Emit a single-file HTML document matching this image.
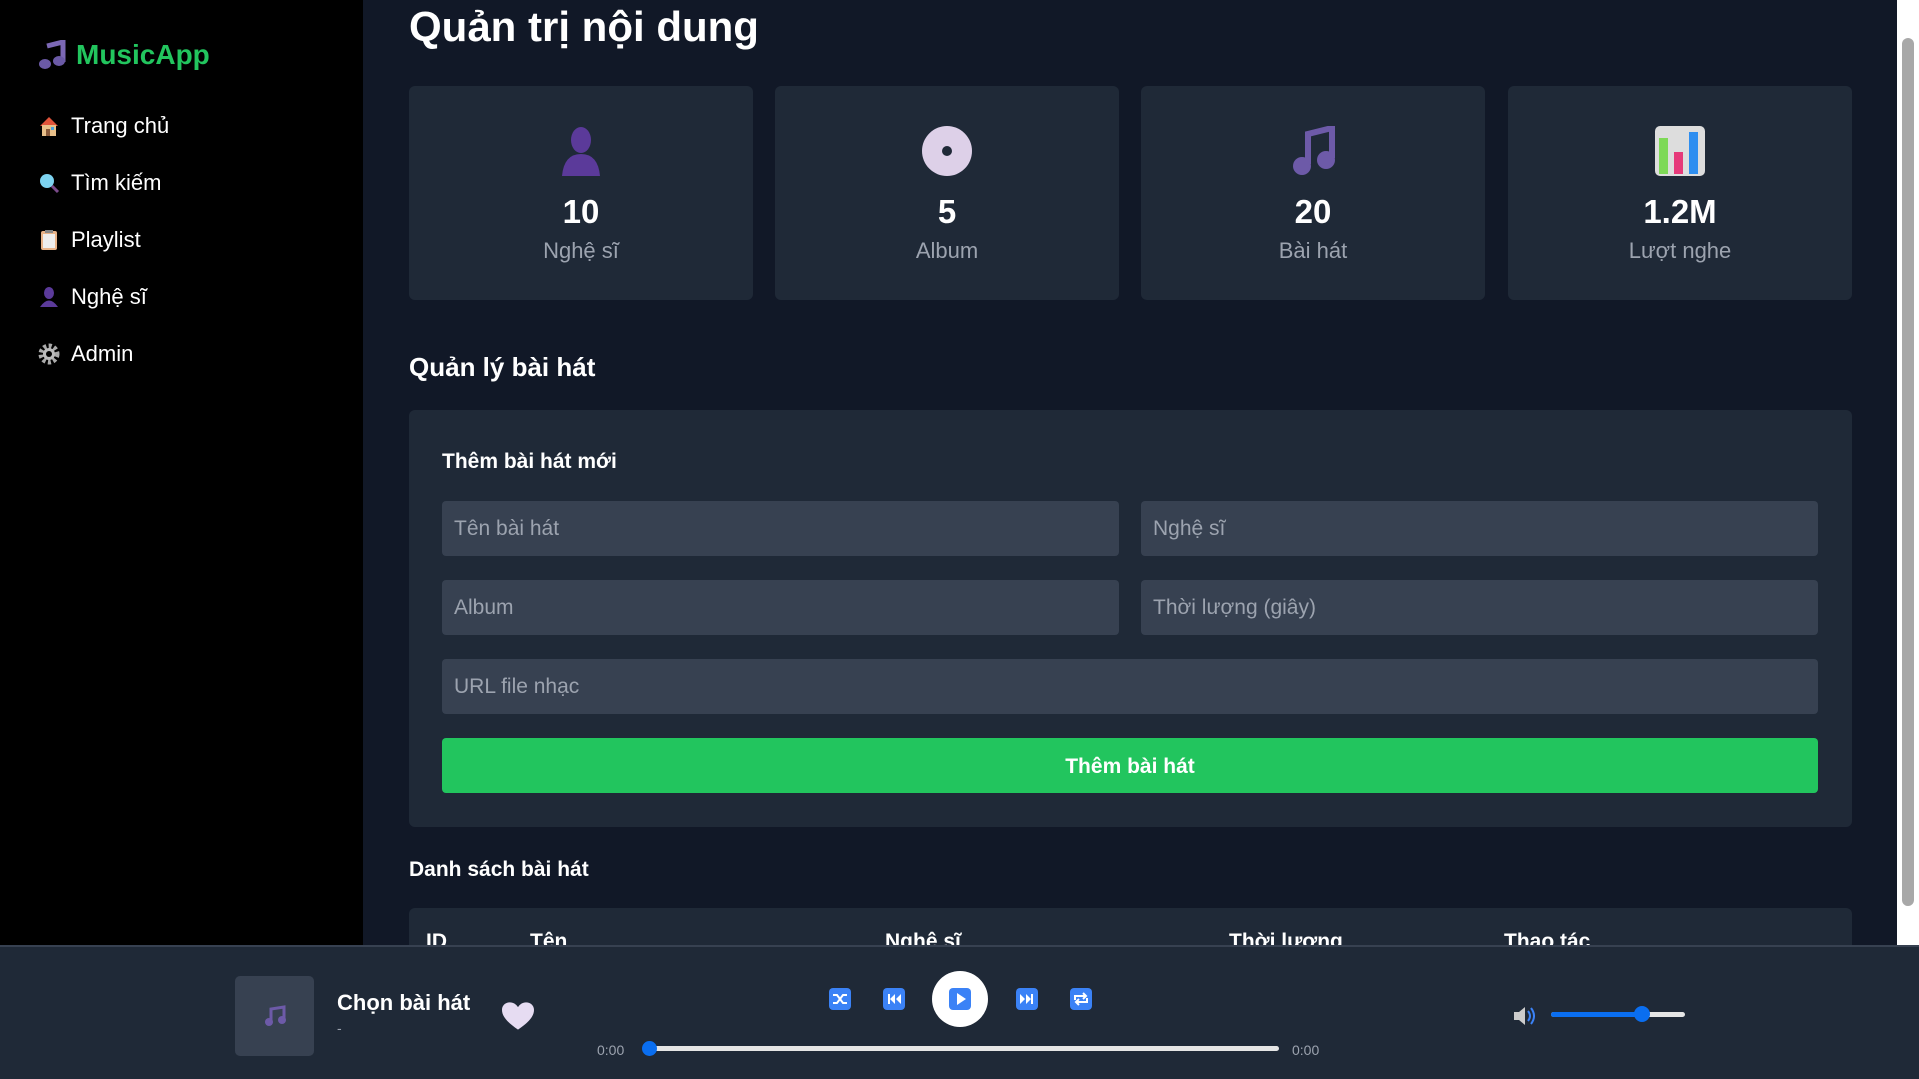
<!DOCTYPE html>
<html><head><meta charset="utf-8"><style>
*{box-sizing:border-box;margin:0;padding:0}
body{width:1919px;height:1079px;overflow:hidden;background:#111827;font-family:"Liberation Sans",sans-serif;color:#fff;position:relative}
.side{position:absolute;left:0;top:0;width:363px;height:945px;background:#000}
.logo{position:absolute;left:38px;top:39px;font-size:28px;font-weight:bold;color:#22c55e;display:flex;align-items:center;gap:10px}
.nav{position:absolute;left:38px;font-size:22px;color:#fff;display:flex;align-items:center;gap:11px}
.ic{width:22px;height:22px;display:inline-block}
.abs{position:absolute}
h1{position:absolute;left:409px;top:3px;font-size:42px;font-weight:bold}
.card{position:absolute;background:#1f2937;border-radius:6px}
.stat{top:86px;height:214px;width:344px;text-align:center}
.stat .n{position:absolute;top:107px;left:0;right:0;font-size:33px;font-weight:bold}
.stat .l{position:absolute;top:152px;left:0;right:0;font-size:22px;color:#9ca3af}
.stat svg{position:absolute;top:40px;left:147px}
.inp{position:absolute;background:#374151;border-radius:4px;height:55px;color:#9ca3af;font-size:21px;padding:16px 12px}
.scroll{position:absolute;left:1897px;top:0;width:22px;height:945px;background:#fff}
.thumb{position:absolute;left:1902px;top:38px;width:12px;height:868px;background:#a8a8a8;border-radius:6px}
.player{position:absolute;left:0;top:945px;width:1919px;height:134px;background:#1f2937;border-top:2px solid #374151}
.btn{position:absolute;width:22px;height:22px;border-radius:4px;background:#3b82f6;top:41px}
</style></head><body>
<div class="side">
 <div class="logo"><svg width="28" height="30" viewBox="0 0 28 30"><path d="M9 6 L25 2 V22" stroke="#7c68b5" stroke-width="5" fill="none"/><ellipse cx="7" cy="24" rx="6" ry="5" fill="#6b5aa6"/><ellipse cx="21" cy="21" rx="6" ry="5" fill="#6b5aa6"/></svg>MusicApp</div>
 <div class="nav" style="top:113px"><svg class="ic" viewBox="0 0 22 22"><path d="M2 11 L11 2 L20 11Z" fill="#e0533a"/><rect x="4" y="10" width="14" height="11" fill="#e8c08a"/><rect x="8" y="14" width="4" height="7" fill="#8a5a3a"/><rect x="13" y="12" width="3" height="3" fill="#4aa3df"/></svg>Trang chủ</div>
 <div class="nav" style="top:170px"><svg class="ic" viewBox="0 0 22 22"><circle cx="9" cy="9" r="7" fill="#7dd3f0"/><path d="M14 14 L20 20" stroke="#7a4a8a" stroke-width="3"/></svg>Tìm kiếm</div>
 <div class="nav" style="top:227px"><svg class="ic" viewBox="0 0 22 22"><rect x="3" y="2" width="16" height="19" rx="2" fill="#e8b48a"/><rect x="5" y="5" width="12" height="14" fill="#eee"/><rect x="7" y="1" width="8" height="3" fill="#888"/></svg>Playlist</div>
 <div class="nav" style="top:284px"><svg class="ic" viewBox="0 0 22 22"><ellipse cx="11" cy="7" rx="5" ry="6" fill="#5b3a9a"/><path d="M2 21 Q11 8 20 21Z" fill="#5b3a9a"/></svg>Nghệ sĩ</div>
 <div class="nav" style="top:341px"><svg class="ic" viewBox="0 0 22 22"><circle cx="11" cy="11" r="8" fill="none" stroke="#aaa" stroke-width="5" stroke-dasharray="3 2.3"/><circle cx="11" cy="11" r="6" fill="#bbb"/><circle cx="11" cy="11" r="3" fill="#000"/></svg>Admin</div>
</div>
<h1>Quản trị nội dung</h1>
<div class="card stat" style="left:409px"><svg width="50" height="50" viewBox="0 0 50 50"><ellipse cx="25" cy="14" rx="10" ry="13" fill="#5b3a9a"/><path d="M6 50 Q8 28 25 28 Q42 28 44 50Z" fill="#5b3a9a"/></svg><div class="n">10</div><div class="l">Nghệ sĩ</div></div>
<div class="card stat" style="left:775px"><svg width="50" height="50" viewBox="0 0 50 50"><circle cx="25" cy="25" r="25" fill="#ddd0e8"/><circle cx="25" cy="25" r="5" fill="#1f2937"/></svg><div class="n">5</div><div class="l">Album</div></div>
<div class="card stat" style="left:1141px"><svg width="50" height="50" viewBox="0 0 50 50"><path d="M20 38 V8 L44 2 V32" stroke="#6d5aa8" stroke-width="6" fill="none"/><ellipse cx="14" cy="40" rx="9" ry="9" fill="#6d5aa8"/><ellipse cx="38" cy="34" rx="9" ry="9" fill="#6d5aa8"/></svg><div class="n">20</div><div class="l">Bài hát</div></div>
<div class="card stat" style="left:1508px"><svg width="50" height="50" viewBox="0 0 50 50"><rect x="0" y="0" width="50" height="50" rx="5" fill="#ddd"/><rect x="4" y="12" width="9" height="36" fill="#7ed957"/><rect x="19" y="26" width="9" height="22" fill="#e63a7a"/><rect x="34" y="6" width="9" height="42" fill="#2e8ef0"/></svg><div class="n">1.2M</div><div class="l">Lượt nghe</div></div>
<div class="abs" style="left:409px;top:352px;font-size:26px;font-weight:bold">Quản lý bài hát</div>
<div class="card" style="left:409px;top:410px;width:1443px;height:417px"></div>
<div class="abs" style="left:442px;top:450px;font-size:21px;font-weight:bold">Thêm bài hát mới</div>
<div class="inp" style="left:442px;top:501px;width:677px">Tên bài hát</div>
<div class="inp" style="left:1141px;top:501px;width:677px">Nghệ sĩ</div>
<div class="inp" style="left:442px;top:580px;width:677px">Album</div>
<div class="inp" style="left:1141px;top:580px;width:677px">Thời lượng (giây)</div>
<div class="inp" style="left:442px;top:659px;width:1376px">URL file nhạc</div>
<div class="abs" style="left:442px;top:738px;width:1376px;height:55px;background:#22c55e;border-radius:4px;text-align:center;font-weight:bold;font-size:21px;line-height:57px">Thêm bài hát</div>
<div class="abs" style="left:409px;top:858px;font-size:21px;font-weight:bold">Danh sách bài hát</div>
<div class="card" style="left:409px;top:908px;width:1443px;height:60px"></div>
<div class="abs" style="top:930px;left:426px;font-size:21px;font-weight:bold">ID</div>
<div class="abs" style="top:930px;left:530px;font-size:21px;font-weight:bold">Tên</div>
<div class="abs" style="top:930px;left:885px;font-size:21px;font-weight:bold">Nghệ sĩ</div>
<div class="abs" style="top:930px;left:1229px;font-size:21px;font-weight:bold">Thời lượng</div>
<div class="abs" style="top:930px;left:1504px;font-size:21px;font-weight:bold">Thao tác</div>
<div class="scroll"></div><div class="thumb"></div>
<div class="player">
 <div class="abs" style="left:235px;top:29px;width:79px;height:80px;background:#374151;border-radius:5px"><svg style="position:absolute;left:28px;top:28px" width="24" height="24" viewBox="0 0 24 24"><path d="M8 18 V5 L21 3 V16" stroke="#6d5aa8" stroke-width="3" fill="none"/><circle cx="6" cy="18" r="4" fill="#6d5aa8"/><circle cx="19" cy="16" r="4" fill="#6d5aa8"/></svg></div>
 <div class="abs" style="left:337px;top:43px;font-size:22px;font-weight:bold">Chọn bài hát</div>
 <div class="abs" style="left:337px;top:73px;font-size:14px;color:#9ca3af">-</div>
 <svg class="abs" style="left:502px;top:55px" width="32" height="29" viewBox="0 0 34 30"><path d="M17 29 C4 20 0 14 0 8 C0 3 4 0 8.5 0 C12 0 15 2 17 5 C19 2 22 0 25.5 0 C30 0 34 3 34 8 C34 14 30 20 17 29Z" fill="#e6dcf2"/></svg>
 <div class="btn" style="left:829px"><svg width="22" height="22" viewBox="0 0 22 22"><path d="M4 7h4l6 8h4M4 15h4l6-8h4" stroke="#fff" stroke-width="2" fill="none"/></svg></div>
 <div class="btn" style="left:883px"><svg width="22" height="22" viewBox="0 0 22 22"><rect x="5" y="6" width="2" height="10" fill="#fff"/><path d="M12 6v10l-5-5zM18 6v10l-5-5z" fill="#fff"/></svg></div>
 <div class="abs" style="left:932px;top:24px;width:56px;height:56px;border-radius:50%;background:#fff"></div>
 <div class="btn" style="left:949px"><svg width="22" height="22" viewBox="0 0 22 22"><path d="M8 5v12l9-6z" fill="#fff"/></svg></div>
 <div class="btn" style="left:1016px"><svg width="22" height="22" viewBox="0 0 22 22"><path d="M4 6v10l5-5zM10 6v10l5-5z" fill="#fff"/><rect x="15" y="6" width="2" height="10" fill="#fff"/></svg></div>
 <div class="btn" style="left:1070px"><svg width="22" height="22" viewBox="0 0 22 22"><path d="M5 12V8h11M13 5l3 3-3 3M17 10v4H6M9 17l-3-3 3-3" stroke="#fff" stroke-width="2" fill="none"/></svg></div>
 <div class="abs" style="left:597px;top:95px;font-size:14px;color:#9ca3af">0:00</div>
 <div class="abs" style="left:649px;top:99px;width:630px;height:5px;background:#e5e5e5;border-radius:3px"></div>
 <div class="abs" style="left:642px;top:94px;width:15px;height:15px;border-radius:50%;background:#0a6ef0"></div>
 <div class="abs" style="left:1292px;top:95px;font-size:14px;color:#9ca3af">0:00</div>
 <svg class="abs" style="left:1513px;top:59px" width="22" height="20" viewBox="0 0 22 20"><path d="M1 6h5l6-5v18l-6-5H1z" fill="#ccc"/><path d="M15 5q4 5 0 10M18 2q6 8 0 16" stroke="#3b82f6" stroke-width="2" fill="none"/></svg>
 <div class="abs" style="left:1551px;top:65px;width:134px;height:5px;background:#e5e5e5;border-radius:3px"></div>
 <div class="abs" style="left:1551px;top:65px;width:91px;height:5px;background:#0a6ef0;border-radius:3px"></div>
 <div class="abs" style="left:1634px;top:59px;width:16px;height:16px;border-radius:50%;background:#0a6ef0"></div>
</div>
</body></html>
